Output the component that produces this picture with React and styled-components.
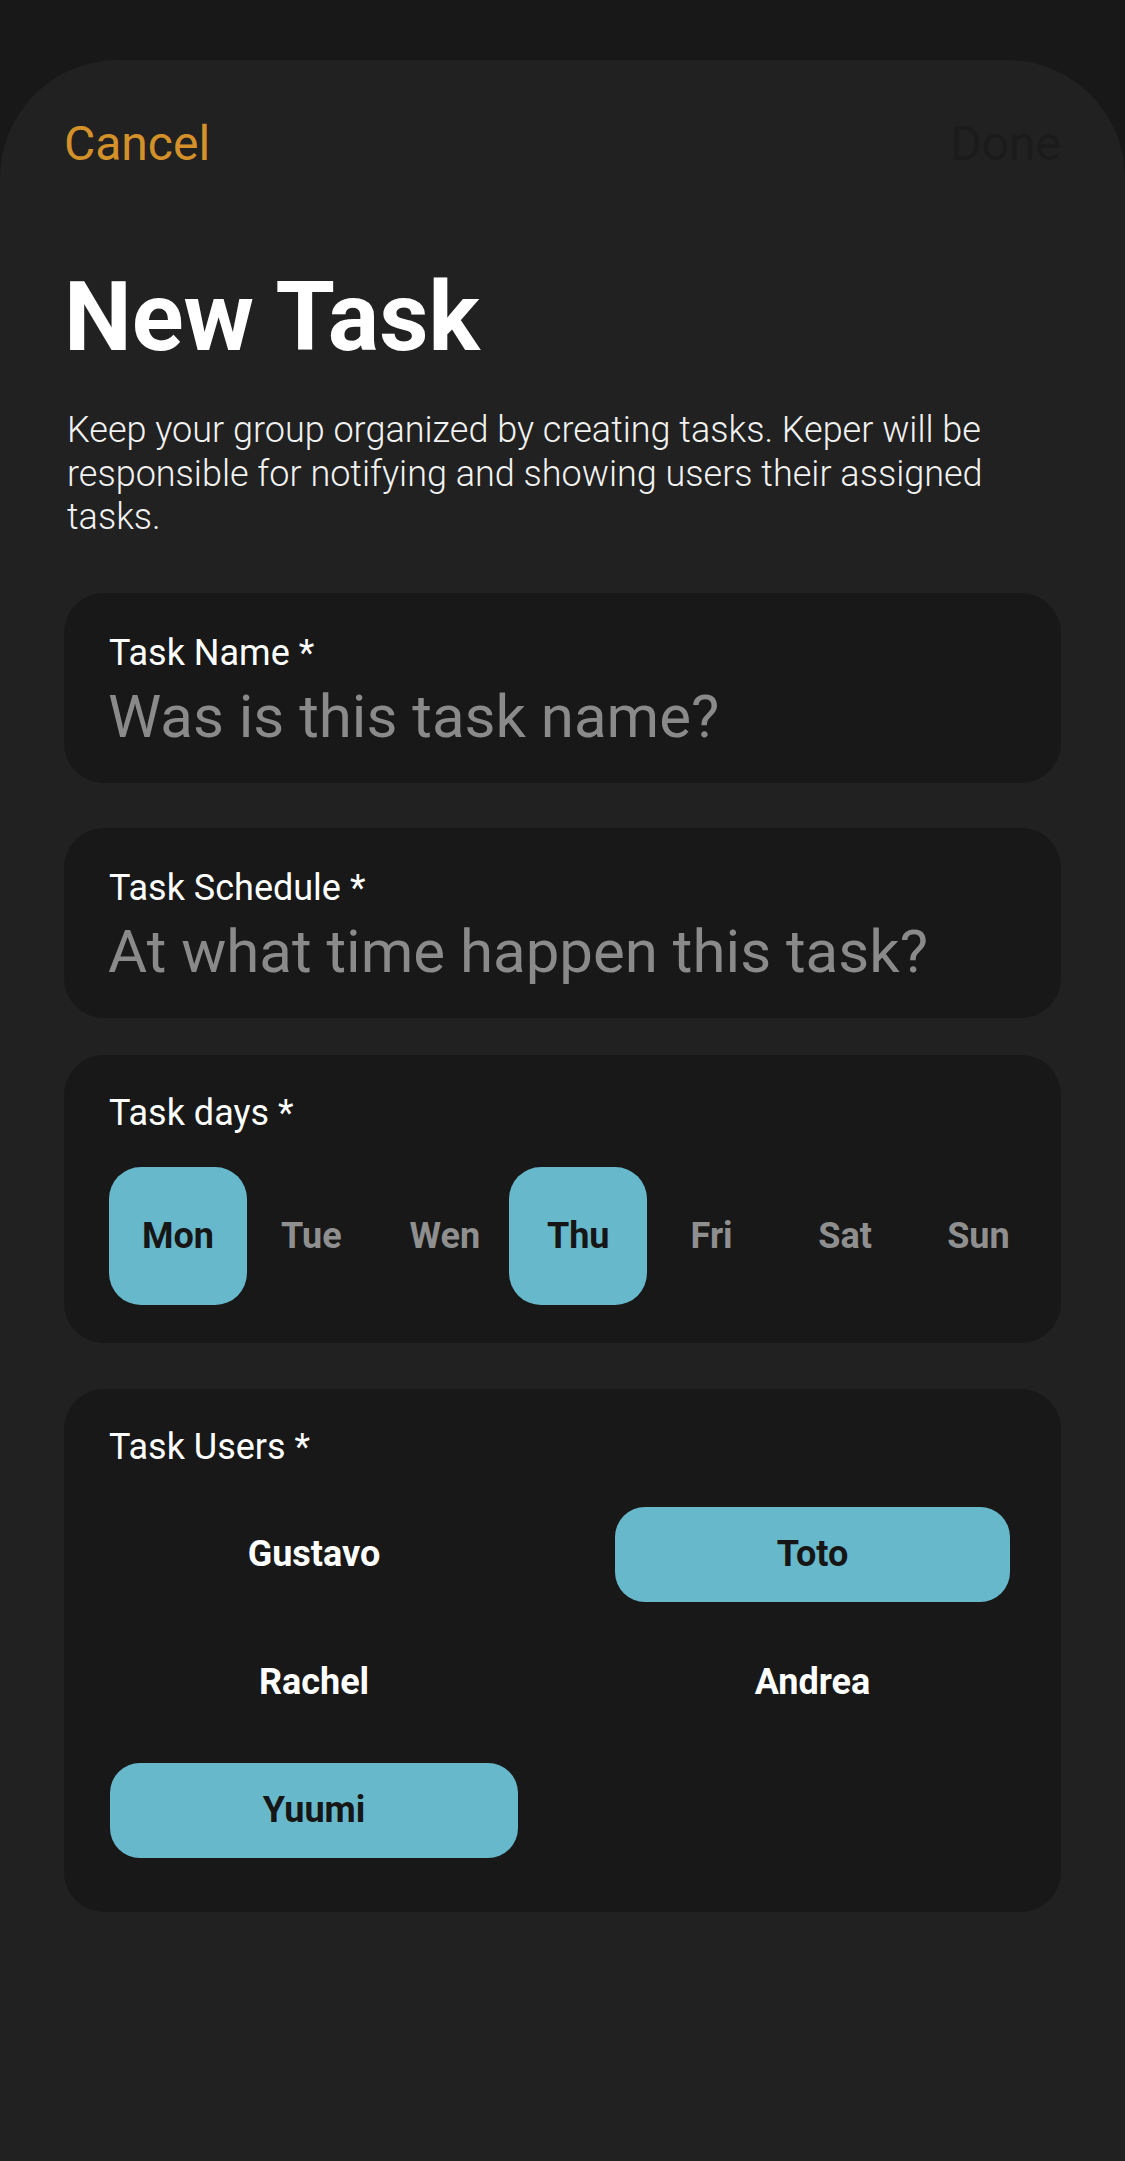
import React from "react";
import styled, { createGlobalStyle } from "styled-components";

const GlobalStyle = createGlobalStyle`
  html, body {
    margin: 0;
    padding: 0;
    background: #181818;
  }
  * { box-sizing: border-box; }
  body {
    font-family: Roboto, "Noto Sans", "Liberation Sans", sans-serif;
  }
`;

const Screen = styled.div`
  min-height: 100vh;
  padding-top: 60px;
  background: #181818;
`;

const Sheet = styled.div`
  min-height: calc(100vh - 60px);
  background: #212121;
  border-radius: 118px 118px 0 0;
  padding: 55px 64px 80px;
  display: flex;
  flex-direction: column;
`;

const Header = styled.div`
  display: flex;
  justify-content: space-between;
  align-items: center;
`;

const HeaderButton = styled.button`
  background: none;
  border: none;
  padding: 0;
  font-family: Roboto, sans-serif;
  font-size: 48px;
  font-weight: 400;
  line-height: 57px;
  color: ${(p) => (p.$primary ? "#d4912a" : "#1b1b1b")};
  cursor: pointer;
`;

const Title = styled.h1`
  margin: 89px 0 0;
  font-family: Roboto, sans-serif;
  font-size: 96px;
  font-weight: 700;
  line-height: 112px;
  color: #ffffff;
`;

const Description = styled.p`
  margin: 36px 0 0;
  padding-left: 3px;
  max-width: 960px;
  font-family: Roboto, sans-serif;
  font-size: 36px;
  font-weight: 300;
  line-height: 43.5px;
  color: #f2f2f2;
`;

const Card = styled.section`
  margin-top: ${(p) => p.$mt}px;
  background: #181818;
  border-radius: 40px;
  padding: ${(p) => p.$pad};
  display: flex;
  flex-direction: column;
`;

const Label = styled.div`
  font-family: Roboto, sans-serif;
  font-size: 36px;
  font-weight: 400;
  line-height: 41px;
  color: #ffffff;
`;

const TextInput = styled.input`
  margin-top: 6px;
  margin-left: -1px;
  height: 73px;
  width: 100%;
  padding: 0;
  background: transparent;
  border: none;
  outline: none;
  font-family: Roboto, sans-serif;
  font-size: 60px;
  font-weight: 400;
  line-height: 73px;
  color: #ffffff;
  &::placeholder {
    color: #8a8a8a;
    opacity: 1;
  }
`;

const DayRow = styled.div`
  margin-top: 33px;
  display: flex;
`;

const DayButton = styled.button`
  flex-shrink: 0;
  width: 138px;
  height: 138px;
  border: none;
  border-radius: 32px;
  padding: 0;
  background: ${(p) => (p.$active ? "#68b8cb" : "transparent")};
  color: ${(p) => (p.$active ? "#161616" : "#8f8f8f")};
  font-family: Roboto, sans-serif;
  font-size: 36px;
  font-weight: 700;
  display: flex;
  align-items: center;
  justify-content: center;
  cursor: pointer;
  & + & {
    margin-left: -4.6px;
  }
`;

const UserGrid = styled.div`
  margin-top: 39px;
  margin-left: 1px;
  display: grid;
  grid-template-columns: 408px 395px;
  column-gap: 97px;
  row-gap: 33px;
`;

const UserButton = styled.button`
  height: 95px;
  border: none;
  border-radius: 30px;
  padding: 0;
  background: ${(p) => (p.$active ? "#68b8cb" : "transparent")};
  color: ${(p) => (p.$active ? "#161616" : "#ffffff")};
  font-family: Roboto, sans-serif;
  font-size: 36px;
  font-weight: 700;
  display: flex;
  align-items: center;
  justify-content: center;
  cursor: pointer;
`;

const days = [
  { name: "Mon", active: true },
  { name: "Tue", active: false },
  { name: "Wen", active: false },
  { name: "Thu", active: true },
  { name: "Fri", active: false },
  { name: "Sat", active: false },
  { name: "Sun", active: false },
];

const users = [
  { name: "Gustavo", active: false },
  { name: "Toto", active: true },
  { name: "Rachel", active: false },
  { name: "Andrea", active: false },
  { name: "Yuumi", active: true },
];

export default function App() {
  return (
    <>
      <GlobalStyle />
      <Screen>
        <Sheet>
          <Header>
            <HeaderButton $primary>Cancel</HeaderButton>
            <HeaderButton>Done</HeaderButton>
          </Header>
          <Title>New Task</Title>
          <Description>
            Keep your group organized by creating tasks. Keper will be
            responsible for notifying and showing users their assigned tasks.
          </Description>

          <Card $mt={53} $pad="40px 45px 30px">
            <Label>Task Name *</Label>
            <TextInput placeholder="Was is this task name?" />
          </Card>

          <Card $mt={45} $pad="40px 45px 30px">
            <Label>Task Schedule *</Label>
            <TextInput placeholder="At what time happen this task?" />
          </Card>

          <Card $mt={37} $pad="38px 45px 38px">
            <Label>Task days *</Label>
            <DayRow>
              {days.map((d) => (
                <DayButton key={d.name} $active={d.active}>
                  {d.name}
                </DayButton>
              ))}
            </DayRow>
          </Card>

          <Card $mt={46} $pad="38px 45px 54px">
            <Label>Task Users *</Label>
            <UserGrid>
              {users.map((u) => (
                <UserButton key={u.name} $active={u.active}>
                  {u.name}
                </UserButton>
              ))}
            </UserGrid>
          </Card>
        </Sheet>
      </Screen>
    </>
  );
}
